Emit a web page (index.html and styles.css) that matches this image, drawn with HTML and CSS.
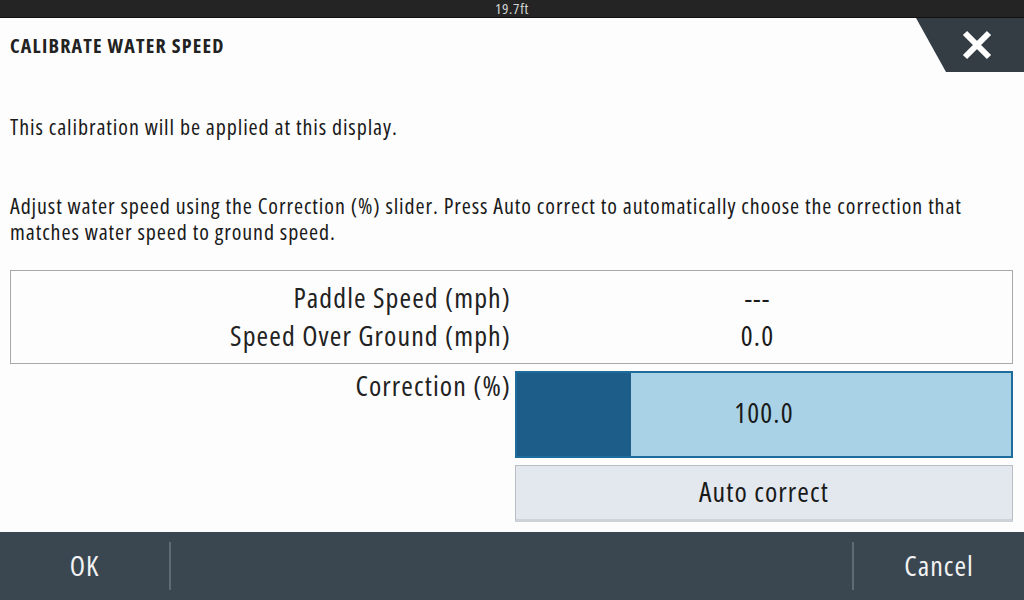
FILE: index.html
```html
<!DOCTYPE html>
<html>
<head>
<meta charset="utf-8">
<link rel="stylesheet" href="styles.css">
</head>
<body>
<div class="screen">
  <div class="topbar">19.7ft</div>
  <div class="dialog">
    <div class="header">
      <div class="title">CALIBRATE WATER SPEED</div>
      <div class="close">
        <svg width="34" height="34" viewBox="0 0 34 34"><path d="M5 5 L29 29 M29 5 L5 29" stroke="#fff" stroke-width="6" stroke-linecap="butt"/></svg>
      </div>
    </div>
    <div class="content">
      <p class="note">This calibration will be applied at this display.</p>
      <p class="para">Adjust water speed using the Correction (%) slider. Press Auto correct to automatically choose the correction that matches water speed to ground speed.</p>
      <div class="readings">
        <div class="lbl">Paddle Speed (mph)</div><div class="val">---</div>
        <div class="lbl">Speed Over Ground (mph)</div><div class="val">0.0</div>
      </div>
      <div class="controls">
        <div class="lbl corr">Correction (%)</div>
        <div class="right">
          <div class="slider">
            <div class="fill" style="width:114px"></div>
            <div class="sval">100.0</div>
          </div>
          <div class="auto">Auto correct</div>
        </div>
      </div>
    </div>
  </div>
  <div class="bottombar">
    <div class="btn ok">OK</div>
    <div class="spacer"></div>
    <div class="btn cancel">Cancel</div>
  </div>
</div>
</body>
</html>
```
FILE: styles.css
```css
* { box-sizing: border-box; }
html, body { margin: 0; padding: 0; }
body {
  width: 1024px; height: 600px; overflow: hidden;
  font-family: "Open Sans", "Noto Sans", sans-serif;
  font-stretch: condensed;
  color: #1a1a1a;
  background: #fff;
}
.screen { display: flex; flex-direction: column; height: 600px; }
.topbar {
  height: 18px; background: #242424; color: #d4d4d4;
  font-size: 15px; letter-spacing: 0.7px; line-height: 17px; text-align: center;
  border-bottom: 1px solid #111;
}
.dialog { flex: 1; display: flex; flex-direction: column; background: #fdfdfd; }
.header { display: flex; justify-content: space-between; height: 54px; }
.title {
  font-weight: 700; font-size: 20px; letter-spacing: 1.2px; padding: 14px 0 0 10px; color: #222;
}
.close {
  width: 108px; height: 54px; background: #353d44;
  clip-path: polygon(0 0, 100% 0, 100% 100%, 30px 100%);
  display: flex; align-items: center; justify-content: flex-end; padding-right: 30px;
}
.content { padding: 0 11px 0 10px; flex: 1; }
.note { margin: 42px 0 0; font-size: 22px; letter-spacing: 0.9px; line-height: 24px; }
.para { margin: 54px 0 0; font-size: 22px; letter-spacing: 0.9px; line-height: 26px; }
.readings {
  margin-top: 26px; border: 1px solid #a8a8a8; height: 94px;
  display: grid; grid-template-columns: 500px 1fr; align-content: center; padding-bottom: 2px;
}
.lbl { text-align: right; font-size: 28px; letter-spacing: 1.1px; line-height: 38px; color: #222; }
.val { text-align: center; font-size: 28px; letter-spacing: 1.1px; line-height: 38px; padding-right: 8px; }
.controls { display: grid; grid-template-columns: 505px 1fr; margin-top: 7px; }
.corr { line-height: 28px; padding-right: 4px; }
.right { display: flex; flex-direction: column; gap: 7px; }
.slider {
  position: relative; height: 87px; border: 2px solid #1d6c9b;
  background: #a9d2e6; display: flex; align-items: center; justify-content: center;
  padding-bottom: 5px;
}
.fill { position: absolute; left: 0; top: 0; bottom: 0; background: #1c5d89; }
.sval { position: relative; font-size: 28px; letter-spacing: 1.1px; }
.auto {
  height: 57px; background: #e2e8ee; border: 1px solid #b8bec4; border-bottom: 3px solid #cdd3d8;
  display: flex; align-items: center; justify-content: center; font-size: 28px; letter-spacing: 1.1px;
  padding-bottom: 3px;
}
.bottombar {
  height: 68px; background: #3a4751; display: flex; align-items: center;
  color: #f2f2f2; font-size: 28px; letter-spacing: 1px;
}
.btn { height: 100%; display: flex; align-items: center; justify-content: center; padding-bottom: 2px; }
.ok { width: 171px; border-right: 2px solid #5e6b75; height: 48px; }
.spacer { flex: 1; border-right: 2px solid #5e6b75; height: 48px; }
.cancel { width: 170px; }
```
